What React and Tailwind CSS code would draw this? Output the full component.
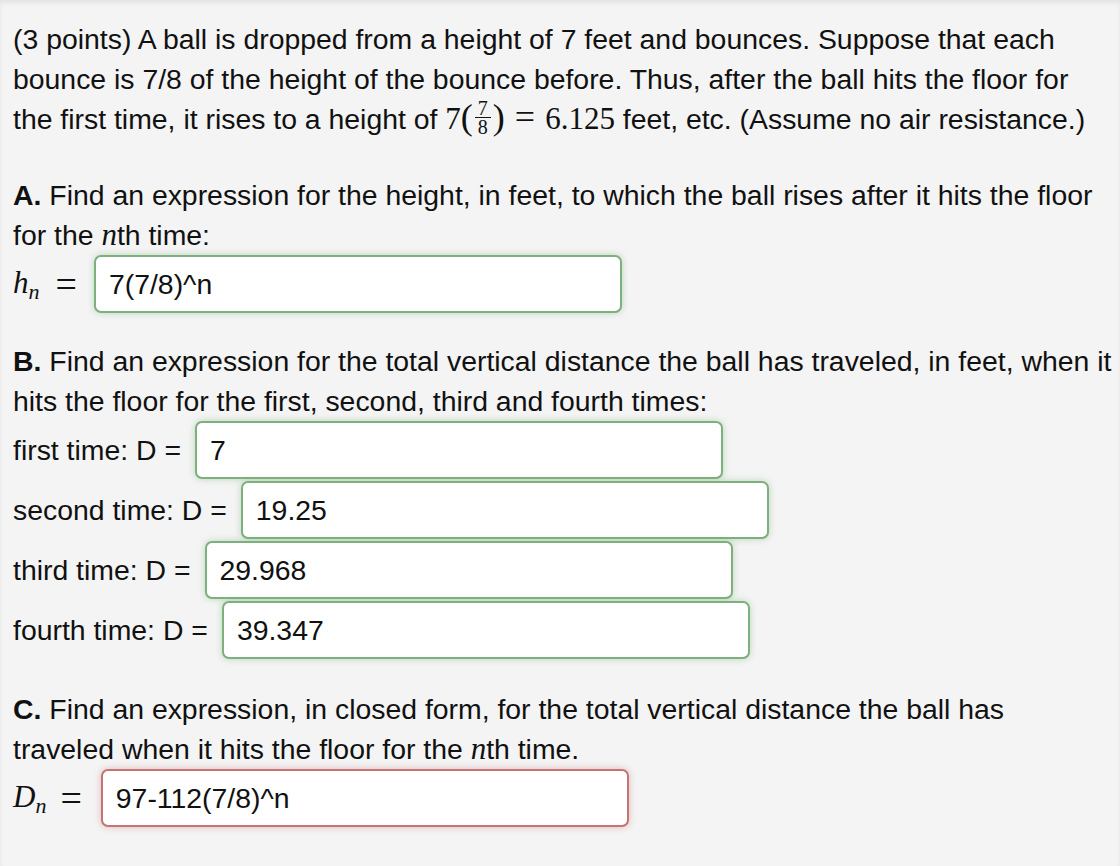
import React from 'react';

const sans = { fontFamily: '"Liberation Sans", Arial, Helvetica, sans-serif' };
const serif = "font-['Liberation_Serif',serif]";

function Frac({ top, bottom }) {
  return (
    <span className="inline-flex flex-col items-center align-middle text-[20px] leading-[18px] mx-[2px] relative top-[-4px]">
      <span className="px-[3px] border-b border-[#111]">{top}</span>
      <span className="px-[3px]">{bottom}</span>
    </span>
  );
}

function Sym({ base, sub }) {
  return (
    <span className={serif + ' text-[31px] italic'}>
      {base}
      <span className="text-[22px] relative top-[6px]">{sub}</span>
    </span>
  );
}

function AnswerBox({ value, bad }) {
  return (
    <div
      className={
        'w-[528px] h-[58px] shrink-0 flex items-center pl-[13px] bg-white rounded-[7px] border-2 ' +
        (bad
          ? 'border-[#c57373] shadow-[0_0_7px_rgba(200,110,110,0.45)]'
          : 'border-[#7db07d] shadow-[0_0_7px_rgba(120,175,120,0.45)]')
      }
    >
      {value}
    </div>
  );
}

const rows = [
  { label: 'first time: D =', value: '7' },
  { label: 'second time: D =', value: '19.25' },
  { label: 'third time: D =', value: '29.968' },
  { label: 'fourth time: D =', value: '39.347' },
];

export default function App() {
  return (
    <div
      className="min-h-[866px] bg-[#f4f4f4] text-[#111] text-[28.4px] leading-[40px] pl-[13px] pt-[19px] whitespace-nowrap shadow-[inset_0_3px_4px_rgba(0,0,0,0.07)]"
      style={sans}
    >
      <p>
        (3 points) A ball is dropped from a height of 7 feet and bounces. Suppose that each
        <br />
        bounce is 7/8 of the height of the bounce before. Thus, after the ball hits the floor for
        <br />
        the first time, it rises to a height of{' '}
        <span className={serif + ' text-[31px]'}>
          7<span className="text-[36px] leading-[30px]">(</span>
          <Frac top="7" bottom="8" />
          <span className="text-[36px] leading-[30px]">)</span>
          <span className="text-[36px] leading-[30px] mx-[10px]">=</span>6.125
        </span>{' '}
        feet, etc. (Assume no air resistance.)
      </p>

      <p className="mt-[35px]">
        <b>A.</b> Find an expression for the height, in feet, to which the ball rises after it hits the floor
        <br />
        for the <span className={serif + ' italic text-[31px]'}>n</span>th time:
      </p>
      <div className="flex items-center h-[58px]">
        <Sym base="h" sub="n" />
        <span className={serif + ' text-[38px] leading-[40px] ml-[16px] mr-[17px]'}>=</span>
        <AnswerBox value="7(7/8)^n" />
      </div>

      <p className="mt-[28px]">
        <b>B.</b> Find an expression for the total vertical distance the ball has traveled, in feet, when it
        <br />
        hits the floor for the first, second, third and fourth times:
      </p>
      <div className="flex flex-col gap-[2px]">
        {rows.map((r) => (
          <div key={r.label} className="flex items-center h-[58px]">
            <span className="mr-[14px]">{r.label}</span>
            <AnswerBox value={r.value} />
          </div>
        ))}
      </div>

      <p className="mt-[30px]">
        <b>C.</b> Find an expression, in closed form, for the total vertical distance the ball has
        <br />
        traveled when it hits the floor for the <span className={serif + ' italic text-[31px]'}>n</span>th time.
      </p>
      <div className="flex items-center h-[58px]">
        <Sym base="D" sub="n" />
        <span className={serif + ' text-[38px] leading-[40px] ml-[14px] mr-[19px]'}>=</span>
        <AnswerBox value="97-112(7/8)^n" bad />
      </div>
    </div>
  );
}
